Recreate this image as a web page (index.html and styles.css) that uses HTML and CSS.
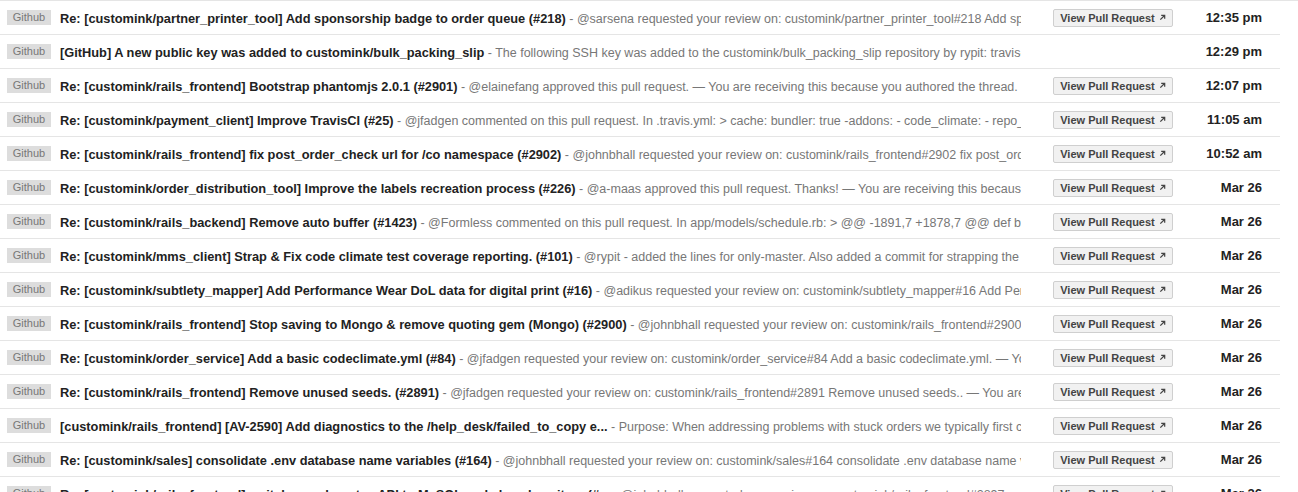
FILE: index.html
```html
<!DOCTYPE html>
<html>
<head>
<meta charset="utf-8">
<link rel="stylesheet" href="styles.css">
</head>
<body>
<div class="page">
<div class="list">
  <div class="row"><span class="label">Github</span><div class="content"><span class="subject">Re: [customink/partner_printer_tool] Add sponsorship badge to order queue (#218)</span><span class="snippet"> - @sarsena requested your review on: customink/partner_printer_tool#218 Add sponsorship badge to order queue</span></div><div class="action"><span class="btn">View Pull Request <svg viewBox="0 0 8 8" class="arr"><path d="M1.5 6.5 L6 2 M2.5 1.5 H6.5 V5.5" fill="none" stroke="#444" stroke-width="1.4"/></svg></span></div><div class="time">12:35 pm</div></div>
  <div class="row"><span class="label">Github</span><div class="content"><span class="subject">[GitHub] A new public key was added to customink/bulk_packing_slip</span><span class="snippet"> - The following SSH key was added to the customink/bulk_packing_slip repository by rypit: travis-ci.com c1:13:fe:ac:0d:66:7a:2b</span></div><div class="action"></div><div class="time">12:29 pm</div></div>
  <div class="row"><span class="label">Github</span><div class="content"><span class="subject">Re: [customink/rails_frontend] Bootstrap phantomjs 2.0.1 (#2901)</span><span class="snippet"> - @elainefang approved this pull request. — You are receiving this because you authored the thread.</span></div><div class="action"><span class="btn">View Pull Request <svg viewBox="0 0 8 8" class="arr"><path d="M1.5 6.5 L6 2 M2.5 1.5 H6.5 V5.5" fill="none" stroke="#444" stroke-width="1.4"/></svg></span></div><div class="time">12:07 pm</div></div>
  <div class="row"><span class="label">Github</span><div class="content"><span class="subject">Re: [customink/payment_client] Improve TravisCI (#25)</span><span class="snippet"> - @jfadgen commented on this pull request. In .travis.yml: &gt; cache: bundler: true -addons: - code_climate: - repo_token</span></div><div class="action"><span class="btn">View Pull Request <svg viewBox="0 0 8 8" class="arr"><path d="M1.5 6.5 L6 2 M2.5 1.5 H6.5 V5.5" fill="none" stroke="#444" stroke-width="1.4"/></svg></span></div><div class="time">11:05 am</div></div>
  <div class="row"><span class="label">Github</span><div class="content"><span class="subject">Re: [customink/rails_frontend] fix post_order_check url for /co namespace (#2902)</span><span class="snippet"> - @johnbhall requested your review on: customink/rails_frontend#2902 fix post_order_check url</span></div><div class="action"><span class="btn">View Pull Request <svg viewBox="0 0 8 8" class="arr"><path d="M1.5 6.5 L6 2 M2.5 1.5 H6.5 V5.5" fill="none" stroke="#444" stroke-width="1.4"/></svg></span></div><div class="time">10:52 am</div></div>
  <div class="row"><span class="label">Github</span><div class="content"><span class="subject">Re: [customink/order_distribution_tool] Improve the labels recreation process (#226)</span><span class="snippet"> - @a-maas approved this pull request. Thanks! — You are receiving this because you authored</span></div><div class="action"><span class="btn">View Pull Request <svg viewBox="0 0 8 8" class="arr"><path d="M1.5 6.5 L6 2 M2.5 1.5 H6.5 V5.5" fill="none" stroke="#444" stroke-width="1.4"/></svg></span></div><div class="time">Mar 26</div></div>
  <div class="row"><span class="label">Github</span><div class="content"><span class="subject">Re: [customink/rails_backend] Remove auto buffer (#1423)</span><span class="snippet"> - @Formless commented on this pull request. In app/models/schedule.rb: &gt; @@ -1891,7 +1878,7 @@ def buffer</span></div><div class="action"><span class="btn">View Pull Request <svg viewBox="0 0 8 8" class="arr"><path d="M1.5 6.5 L6 2 M2.5 1.5 H6.5 V5.5" fill="none" stroke="#444" stroke-width="1.4"/></svg></span></div><div class="time">Mar 26</div></div>
  <div class="row"><span class="label">Github</span><div class="content"><span class="subject">Re: [customink/mms_client] Strap &amp; Fix code climate test coverage reporting. (#101)</span><span class="snippet"> - @rypit - added the lines for only-master. Also added a commit for strapping the gem</span></div><div class="action"><span class="btn">View Pull Request <svg viewBox="0 0 8 8" class="arr"><path d="M1.5 6.5 L6 2 M2.5 1.5 H6.5 V5.5" fill="none" stroke="#444" stroke-width="1.4"/></svg></span></div><div class="time">Mar 26</div></div>
  <div class="row"><span class="label">Github</span><div class="content"><span class="subject">Re: [customink/subtlety_mapper] Add Performance Wear DoL data for digital print (#16)</span><span class="snippet"> - @adikus requested your review on: customink/subtlety_mapper#16 Add Performance Wear</span></div><div class="action"><span class="btn">View Pull Request <svg viewBox="0 0 8 8" class="arr"><path d="M1.5 6.5 L6 2 M2.5 1.5 H6.5 V5.5" fill="none" stroke="#444" stroke-width="1.4"/></svg></span></div><div class="time">Mar 26</div></div>
  <div class="row"><span class="label">Github</span><div class="content"><span class="subject">Re: [customink/rails_frontend] Stop saving to Mongo &amp; remove quoting gem (Mongo) (#2900)</span><span class="snippet"> - @johnbhall requested your review on: customink/rails_frontend#2900 Stop saving</span></div><div class="action"><span class="btn">View Pull Request <svg viewBox="0 0 8 8" class="arr"><path d="M1.5 6.5 L6 2 M2.5 1.5 H6.5 V5.5" fill="none" stroke="#444" stroke-width="1.4"/></svg></span></div><div class="time">Mar 26</div></div>
  <div class="row"><span class="label">Github</span><div class="content"><span class="subject">Re: [customink/order_service] Add a basic codeclimate.yml (#84)</span><span class="snippet"> - @jfadgen requested your review on: customink/order_service#84 Add a basic codeclimate.yml. — You are receiving this</span></div><div class="action"><span class="btn">View Pull Request <svg viewBox="0 0 8 8" class="arr"><path d="M1.5 6.5 L6 2 M2.5 1.5 H6.5 V5.5" fill="none" stroke="#444" stroke-width="1.4"/></svg></span></div><div class="time">Mar 26</div></div>
  <div class="row"><span class="label">Github</span><div class="content"><span class="subject">Re: [customink/rails_frontend] Remove unused seeds. (#2891)</span><span class="snippet"> - @jfadgen requested your review on: customink/rails_frontend#2891 Remove unused seeds.. — You are receiving this</span></div><div class="action"><span class="btn">View Pull Request <svg viewBox="0 0 8 8" class="arr"><path d="M1.5 6.5 L6 2 M2.5 1.5 H6.5 V5.5" fill="none" stroke="#444" stroke-width="1.4"/></svg></span></div><div class="time">Mar 26</div></div>
  <div class="row"><span class="label">Github</span><div class="content"><span class="subject">[customink/rails_frontend] [AV-2590] Add diagnostics to the /help_desk/failed_to_copy e...</span><span class="snippet"> - Purpose: When addressing problems with stuck orders we typically first check</span></div><div class="action"><span class="btn">View Pull Request <svg viewBox="0 0 8 8" class="arr"><path d="M1.5 6.5 L6 2 M2.5 1.5 H6.5 V5.5" fill="none" stroke="#444" stroke-width="1.4"/></svg></span></div><div class="time">Mar 26</div></div>
  <div class="row"><span class="label">Github</span><div class="content"><span class="subject">Re: [customink/sales] consolidate .env database name variables (#164)</span><span class="snippet"> - @johnbhall requested your review on: customink/sales#164 consolidate .env database name variables</span></div><div class="action"><span class="btn">View Pull Request <svg viewBox="0 0 8 8" class="arr"><path d="M1.5 6.5 L6 2 M2.5 1.5 H6.5 V5.5" fill="none" stroke="#444" stroke-width="1.4"/></svg></span></div><div class="time">Mar 26</div></div>
  <div class="row"><span class="label">Github</span><div class="content"><span class="subject">Re: [customink/rails_frontend] switch saved quotes API to MySQL and also clean it up (#...</span><span class="snippet"> - @johnbhall requested your review on: customink/rails_frontend#2897 : switch saved</span></div><div class="action"><span class="btn">View Pull Request <svg viewBox="0 0 8 8" class="arr"><path d="M1.5 6.5 L6 2 M2.5 1.5 H6.5 V5.5" fill="none" stroke="#444" stroke-width="1.4"/></svg></span></div><div class="time">Mar 26</div></div>
</div>
</div>
</body>
</html>
```
FILE: styles.css
```css
html, body {
  margin: 0;
  padding: 0;
  background: #fff;
}
body {
  font-family: "Liberation Sans", Arial, Helvetica, sans-serif;
  overflow: hidden;
}
.page {
  border-top: 1px solid #e5e5e5;
}
.list {
  width: 1280px;
}
.row {
  display: flex;
  align-items: center;
  height: 33px;
  border-bottom: 1px solid #e5e5e5;
  padding: 0 18px 0 7px;
}
.label {
  flex: none;
  width: 44px;
  height: 15px;
  line-height: 15px;
  margin-right: 9px;
  background: #dddddd;
  color: #777;
  font-size: 11px;
  text-align: center;
}
.content {
  flex: none;
  width: 961px;
  overflow: hidden;
  white-space: nowrap;
}
.subject {
  font-size: 12.8px;
  font-weight: bold;
  color: #222;
}
.snippet {
  font-size: 12.5px;
  color: #777;
}
.action {
  flex: none;
  width: 120px;
  margin-left: 32px;
  height: 18px;
}
.btn {
  display: flex;
  align-items: center;
  justify-content: center;
  gap: 4px;
  box-sizing: border-box;
  width: 120px;
  height: 18px;
  border: 1px solid #cfcfcf;
  border-radius: 2px;
  background: #f1f1f1;
  color: #444;
  font-size: 11px;
  font-weight: bold;
}
.arr {
  width: 7px;
  height: 7px;
}
.time {
  flex: 1;
  text-align: right;
  font-size: 13px;
  font-weight: bold;
  color: #222;
}
```
